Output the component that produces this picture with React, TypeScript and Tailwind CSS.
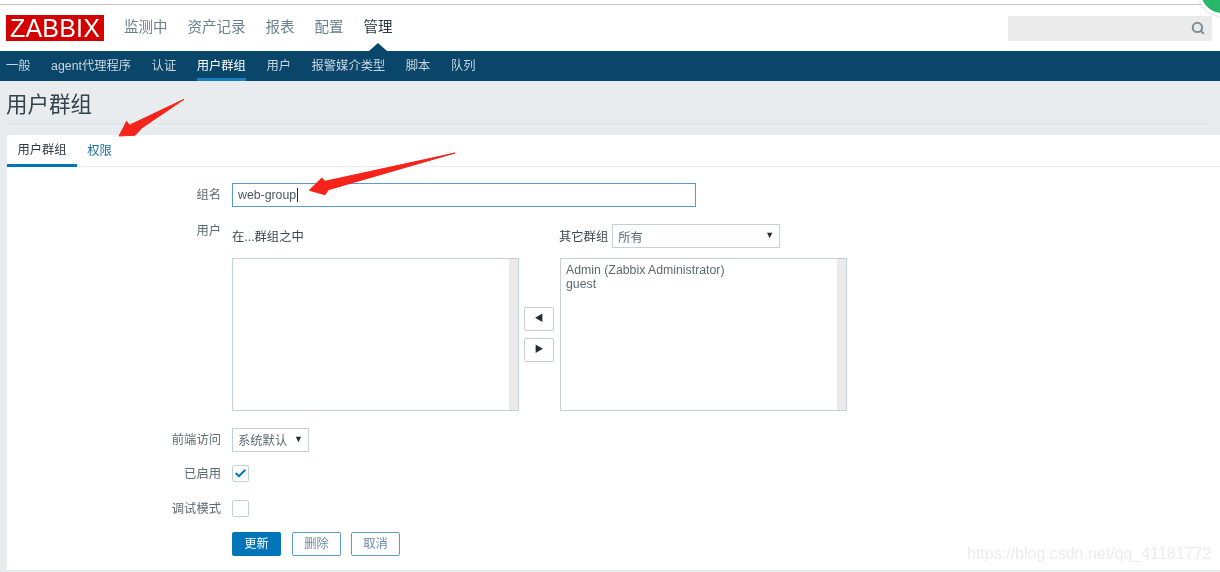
import React from 'react';
import { Search, Check } from 'lucide-react';

const topMenu = ['监测中', '资产记录', '报表', '配置', '管理'];
const subMenu = ['一般', 'agent代理程序', '认证', '用户群组', '用户', '报警媒介类型', '脚本', '队列'];

const font = 'font-["Liberation_Sans","Noto_Sans_CJK_SC",sans-serif]';

// list box with the grey scrollbar track down its right edge
const ListBox: React.FC<{ items?: string[] }> = ({ items = [] }) => (
    <div className="flex h-[153px] w-[287px] border border-[#c5d0d6] bg-white">
        <div className="flex-1 pl-[5px] pt-[4px] text-[12.3px] leading-[14px] text-[#5c6a73]">
            {items.map((item) => (
                <div key={item}>{item}</div>
            ))}
        </div>
        <div className="w-[9px] bg-[#ebebeb]" />
    </div>
);

const Caret = () => <span className="mb-[2px] text-[9px] leading-none text-[#1f2c33]">▼</span>;

const Row: React.FC<{ label: string; children: React.ReactNode; className?: string; labelClass?: string }> = ({ label, children, className = '', labelClass = '' }) => (
    <div className={`flex items-center ${className}`}>
        <div className={`w-[225px] pr-[11px] text-right text-[12.3px] text-[#5c6a73] ${labelClass}`}>{label}</div>
        {children}
    </div>
);

const Arrow: React.FC<{ d: string; box: string; w: number; h: number }> = ({ d, box, w, h }) => (
    <svg className={`absolute ${box}`} viewBox={`0 0 ${w} ${h}`}>
        <path d={d} fill="#f5231a" stroke="#f5231a" strokeWidth={1} strokeLinejoin="round" />
    </svg>
);

export default function App() {
    return (
        <div className={`relative h-[572px] w-[1220px] overflow-hidden bg-[#e9ecef] blur-[0.5px] ${font}`}>
            {/* Top menu */}
            <div className="h-[51px] bg-white pt-[4px]">
                <div className="h-[1px] bg-[#c4c4c4]" />
                <div className="flex items-center pl-[6px] pt-[10px]">
                    <div className="flex h-[26px] w-[98px] items-center justify-center bg-[#d40000] text-[25px] leading-none tracking-[0.2px] text-white">
                        ZABBIX
                    </div>
                    <div className="ml-[20px] flex gap-[20px] text-[14.5px] text-[#69808d]">
                        {topMenu.map((m) => (
                            <span key={m} className={m === '管理' ? 'text-[#2c3a43]' : ''}>
                                {m}
                            </span>
                        ))}
                    </div>
                    <div className="ml-auto mr-[8px] flex h-[25px] w-[204px] items-center justify-end bg-[#ebebeb] pr-[7px]">
                        <Search size={14} strokeWidth={3.5} className="text-[#7a8f9c]" />
                    </div>
                </div>
            </div>

            {/* Sub menu */}
            <div className="relative flex h-[30px] items-center gap-[20.5px] bg-[#0a466a] pl-[6px] text-[12.3px] text-[#c8d6df]">
                <div className="absolute left-[369px] top-[-8px] h-0 w-0 border-x-[9px] border-b-[8px] border-x-transparent border-b-[#0a466a]" />
                {subMenu.map((m) => (
                    <span
                        key={m}
                        className={m === '用户群组' ? 'flex h-full items-center border-b-[3px] border-[#1a80c4] pt-[3px] text-white' : ''}
                    >
                        {m}
                    </span>
                ))}
            </div>

            {/* Page title */}
            <div className="mx-[7px] h-[43px] border-b border-[#dfe3e6] pt-[9px] text-[21.5px] leading-[30px] text-[#34434c]">
                <span className="ml-[-1px]">用户群组</span>
            </div>

            {/* Panel */}
            <div className="ml-[7px] mt-[11px] h-[436px] border-b border-[#e4e7ea] bg-white">
                <div className="flex h-[32px] border-b border-[#ebeef0] text-[12.3px]">
                    <div className="flex h-[32px] w-[70px] items-center justify-center border-b-[3px] border-[#0275b8] pt-[2px] text-[#2c3a43]">用户群组</div>
                    <div className="flex h-[31px] w-[45px] items-center justify-center pt-[1px] text-[#1a6ea5]">权限</div>
                </div>

                <div className="pt-[16px]">
                    <Row label="组名">
                        <div className="flex h-[24px] w-[464px] items-center border border-[#5a9dc4] px-[5px] text-[12.3px] text-[#4a5963]">
                            web-group<span className="ml-[1px] h-[14px] w-[1px] bg-[#1f2c33]" />
                        </div>
                    </Row>

                    <div className="mt-[17px] flex">
                        <div className="w-[225px] pr-[11px] text-right text-[12.3px] leading-[14px] text-[#5c6a73]">用户</div>
                        <div className="w-[287px]">
                            <div className="h-[34px] pt-[6px] text-[12.3px] leading-[14px] text-[#3a4851]">在...群组之中</div>
                            <ListBox />
                        </div>
                        <div className="ml-[5px] flex w-[30px] flex-col gap-[7px] pt-[83px]">
                            {['◀', '▶'].map((g) => (
                                <div key={g} className="flex h-[24px] items-center justify-center rounded-[2px] border border-[#c5d0d6] text-[9px] text-[#1f2c33]">
                                    {g}
                                </div>
                            ))}
                        </div>
                        <div className="ml-[5px] w-[288px]">
                            <div className="flex h-[34px] items-start text-[12.3px] text-[#3a4851]">
                                <span className="mt-[4px]">其它群组</span>
                                <div className="ml-[4px] flex h-[24px] w-[168px] items-center justify-between border border-[#c5d0d6] pl-[5px] pr-[5px] text-[#5c6a73]">
                                    <span className="pt-[4px]">所有</span>
                                    <Caret />
                                </div>
                            </div>
                            <div className="ml-[1px]">
                                <ListBox items={['Admin (Zabbix Administrator)', 'guest']} />
                            </div>
                        </div>
                    </div>

                    <Row label="前端访问" className="mt-[17px]">
                        <div className="flex h-[24px] w-[77px] items-center justify-between border border-[#c5d0d6] px-[5px] text-[12.3px] text-[#5c6a73]">
                            <span className="pt-[3px]">系统默认</span>
                            <Caret />
                        </div>
                    </Row>

                    <Row label="已启用" className="mt-[13px] h-[17px]" labelClass="pt-[2px]">
                        <div className="flex h-[17px] w-[17px] items-center justify-center rounded-[2px] border border-[#c5d0d6]">
                            <Check size={13} strokeWidth={3.5} className="text-[#0275b8]" />
                        </div>
                    </Row>

                    <Row label="调试模式" className="mt-[18px] h-[17px]" labelClass="pt-[2px]">
                        <div className="h-[17px] w-[17px] rounded-[2px] border border-[#c5d0d6]" />
                    </Row>

                    <div className="ml-[225px] mt-[15px] flex text-[12.3px]">
                        <div className="flex h-[24px] w-[49px] items-center justify-center rounded-[2px] bg-[#0275b8] text-white">更新</div>
                        <div className="ml-[11px] flex h-[24px] w-[49px] items-center justify-center rounded-[2px] border border-[#5a9dc4] text-[#6a8ca5]">删除</div>
                        <div className="ml-[10px] flex h-[24px] w-[49px] items-center justify-center rounded-[2px] border border-[#5a9dc4] text-[#6a8ca5]">取消</div>
                    </div>
                </div>
            </div>

            {/* Green badge cut off by the corner */}
            <div className="absolute left-[1198px] top-[-32px] h-[48px] w-[48px] rounded-full border-[3px] border-white bg-[#27b86a] shadow-sm" />

            {/* Red annotation arrows */}
            <Arrow box="left-[118px] top-[98px] h-[40px] w-[68px]" w={68} h={40} d="M66 1.3 L23.7 30 L17 37.3 L1 38 L8.7 23.3 L11.3 27.3 Z" />
            <Arrow box="left-[308px] top-[152px] h-[44px] w-[148px]" w={148} h={44} d="M147 1 L20.3 37.7 L17 42.7 L1.3 38.3 L13.7 26 L17 29.3 Z" />

            {/* Watermark */}
            <div className="absolute left-[967px] top-[544px] text-[16px] leading-[20px] text-[#ececec]">https://blog.csdn.net/qq_41181772</div>
        </div>
    );
}
